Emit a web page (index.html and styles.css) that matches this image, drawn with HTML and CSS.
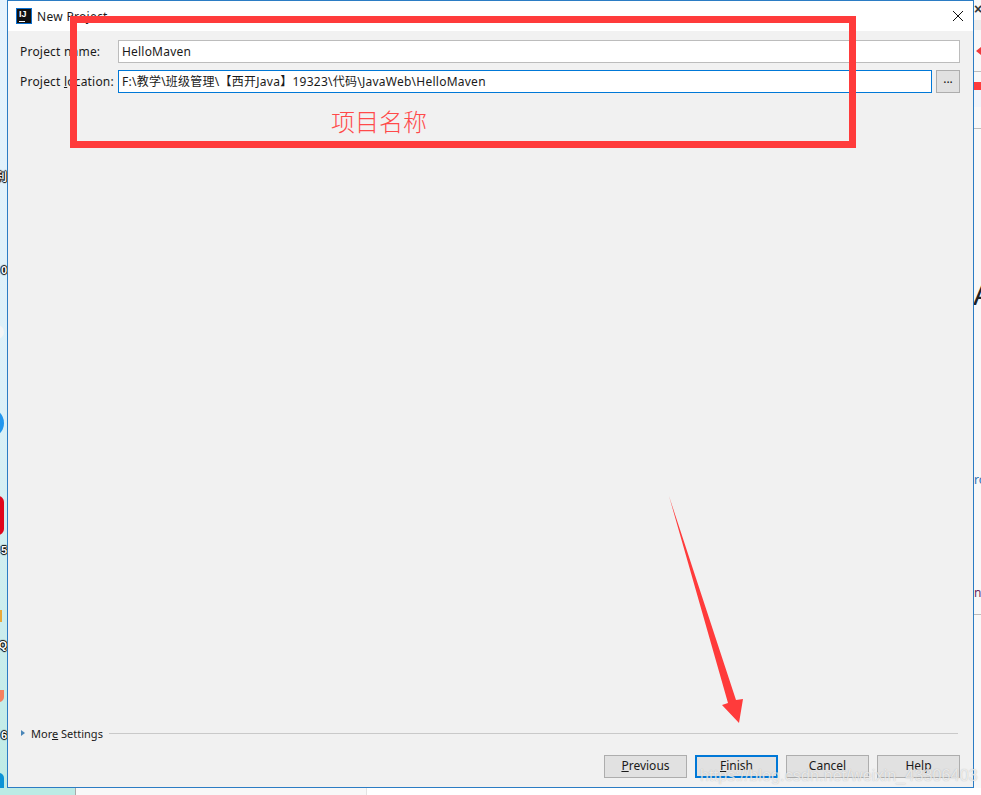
FILE: index.html

```html
<!DOCTYPE html>
<html lang="en">
<head>
  <meta charset="UTF-8" />
  <title>New Project</title>
  <link rel="stylesheet" href="styles.css">
</head>
<body>
  <div class="desktop">
    <div class="bg-left">
      <span class="bit label-bit bit-1">利</span>
      <span class="bit label-bit bit-2">0</span>
      <span class="bit bit-white"></span>
      <span class="bit bit-blue"></span>
      <span class="bit bit-red"></span>
      <span class="bit label-bit bit-3">5</span>
      <span class="bit bit-orange"></span>
      <span class="bit label-bit bit-4">Q</span>
      <span class="bit bit-coral"></span>
      <span class="bit label-bit bit-5">6</span>
      <span class="bit bit-cyan"></span>
    </div>

    <div class="dialog">
      <div class="titlebar">
        <div class="app-icon"><span>IJ</span><i></i></div>
        <div class="title">New Project</div>
        <svg class="close" width="12" height="12" viewBox="0 0 12 12">
          <path d="M1 1 L11 11 M11 1 L1 11" stroke="#111" stroke-width="1" fill="none"/>
        </svg>
      </div>

      <div class="content">
        <div class="form">
          <label class="field-label">Project name:</label>
          <div class="input wide">HelloMaven</div>
          <label class="field-label">Project <u>l</u>ocation:</label>
          <div class="location">
            <div class="input focused">F:\教学\班级管理\【西开Java】19323\代码\JavaWeb\HelloMaven</div>
            <button class="browse">...</button>
          </div>
        </div>

        <div class="more">
          <span class="arrow-right"></span>
          <span class="more-label">Mor<u>e</u> Settings</span>
          <span class="more-line"></span>
        </div>

        <div class="buttons">
          <button class="btn"><u>P</u>revious</button>
          <button class="btn primary"><u>F</u>inish</button>
          <button class="btn">Cancel</button>
          <button class="btn">Help</button>
        </div>
      </div>
    </div>

    <div class="bg-right">
      <span class="r-close">×</span>
      <span class="r-band"></span>
      <span class="r-tri"></span>
      <span class="r-line r-line-1"></span>
      <span class="r-red"></span>
      <span class="r-pale"></span>
      <span class="r-line r-line-2"></span>
      <span class="r-a">A</span>
      <span class="r-ro">ro</span>
      <span class="r-ni">ni</span>
      <span class="r-line r-line-3"></span>
    </div>

    <div class="bg-bottom">
      <div class="bottom-teal"></div>
      <div class="bottom-page"></div>
      <div class="bottom-rest"></div>
    </div>

    <div class="red-box"></div>
    <div class="red-note">项目名称</div>
    <svg class="red-arrow" width="981" height="795" viewBox="0 0 981 795">
      <polygon points="669,496 736,700 743,699 739,723 722,705 728,703" fill="#ff3b3b"/>
    </svg>
    <div class="watermark">https://blog.csdn.net/weixin_43306403</div>
  </div>
</body>
</html>
```

FILE: styles.css

```css
html, body {
  margin: 0;
  padding: 0;
}
body {
  font-family: "Noto Sans", "Noto Sans CJK SC", sans-serif;
  font-size: 12px;
  color: #1a1a1a;
  overflow: hidden;
}
.desktop {
  position: relative;
  width: 981px;
  height: 795px;
  overflow: hidden;
  background: #fff;
  display: grid;
  grid-template-columns: 7px 967px 7px;
  grid-template-rows: 788px 7px;
}

/* desktop peeking out around the dialog */
.bg-left {
  position: relative;
  overflow: hidden;
  background: linear-gradient(to bottom, #e6f3fd 0%, #dcf0f8 50%, #bfebe5 100%);
}
.bit {
  position: absolute;
  display: block;
}
.label-bit {
  right: 0;
  width: 14px;
  text-align: right;
  font: bold 11px/12px "Liberation Sans", "Noto Sans CJK SC", sans-serif;
  color: #fff;
  text-shadow: 1px 0 1px #000, -1px 0 1px #000, 0 1px 1px #000, 0 -1px 1px #000;
}
.bit-1 { top: 171px; }
.bit-2 { top: 264px; }
.bit-3 { top: 544px; }
.bit-4 { top: 639px; }
.bit-5 { top: 729px; }
.bit-white {
  top: 325px;
  left: -10px;
  width: 14px;
  height: 14px;
  border-radius: 50%;
  background: #f3f5f6;
}
.bit-blue {
  top: 408px;
  left: -26px;
  width: 30px;
  height: 30px;
  border-radius: 50%;
  background: #2196ee;
}
.bit-red {
  top: 496px;
  left: -12px;
  width: 16px;
  height: 39px;
  border-radius: 6px;
  background: #e0061c;
}
.bit-orange {
  top: 610px;
  left: 0;
  width: 2px;
  height: 12px;
  background: #e9a93a;
}
.bit-coral {
  top: 690px;
  left: -6px;
  width: 10px;
  height: 12px;
  border-radius: 0 0 6px 6px;
  background: #f5805f;
}
.bit-cyan {
  top: 773px;
  left: -12px;
  width: 16px;
  height: 30px;
  border-radius: 5px;
  background: #0d93d6;
}

.bg-right {
  position: relative;
  overflow: hidden;
  background: #f8f8f8;
}
.bg-right span {
  position: absolute;
  display: block;
}
.r-close {
  top: 1px;
  left: 0;
  font: bold 14px/16px "Liberation Sans", sans-serif;
  color: #333;
}
.r-band {
  top: 20px;
  left: 0;
  width: 7px;
  height: 10px;
  background: #ececec;
}
.r-tri {
  top: 47px;
  left: 2px;
  border-style: solid;
  border-width: 4px 5px 4px 0;
  border-color: transparent #f0393b transparent transparent;
}
.r-line {
  left: 0;
  width: 7px;
  height: 1px;
  background: #bdbdbd;
}
.r-line-1 { top: 71px; }
.r-line-2 { top: 128px; }
.r-line-3 { top: 614px; }
.r-red {
  top: 82px;
  left: 0;
  width: 7px;
  height: 8px;
  background: #ff3b3b;
}
.r-pale {
  top: 90px;
  left: 0;
  width: 7px;
  height: 17px;
  background: #f1f4fa;
}
.r-a {
  top: 280px;
  left: -1px;
  font: 30px/30px "Liberation Sans", sans-serif;
  color: #222;
}
.r-ro {
  top: 473px;
  left: 0;
  font: 12px/14px "Noto Sans", sans-serif;
  color: #2b6fb3;
}
.r-ni {
  top: 586px;
  left: 0;
  font: 12px/14px "Noto Sans", sans-serif;
  color: #6a2a5e;
}

.bg-bottom {
  grid-column: 1 / 4;
  display: flex;
}
.bottom-teal {
  width: 75px;
  background: #bcebe5;
  border-right: 1px solid #a9a9a9;
}
.bottom-page {
  width: 290px;
  background: #f8f8f8;
  border-right: 1px solid #e4e4e4;
}
.bottom-rest {
  flex: 1;
  background: #fff;
}

/* dialog */
.dialog {
  display: flex;
  flex-direction: column;
  border: 1px solid #2b7cc4;
  box-sizing: border-box;
  background: #f1f1f1;
  min-height: 0;
}
.titlebar {
  flex: none;
  height: 30px;
  background: #fff;
  display: flex;
  align-items: center;
  padding: 0 9px 0 8px;
  position: relative;
}
.app-icon {
  width: 14px;
  height: 14px;
  background: #111;
  border: 1px solid #0a6fd0;
  margin-right: 5px;
  position: relative;
  color: #fff;
}
.app-icon span {
  display: block;
  font: bold 9px/9px "Liberation Sans", sans-serif;
  padding: 1px 0 0 2px;
}
.app-icon i {
  position: absolute;
  left: 2px;
  bottom: 1px;
  width: 6px;
  height: 1px;
  background: #fff;
}
.title {
  flex: 1;
  font-size: 12px;
  letter-spacing: 0.3px;
}
.content {
  flex: 1;
  display: flex;
  flex-direction: column;
  padding: 9px 13px 9px 12px;
  min-height: 0;
}
.form {
  display: grid;
  grid-template-columns: 98px 1fr;
  grid-template-rows: 23px 23px;
  row-gap: 7px;
  align-items: center;
  flex: 1;
  align-content: start;
}
.field-label {
  white-space: nowrap;
  line-height: 23px;
  letter-spacing: 0.2px;
}
.input {
  box-sizing: border-box;
  height: 23px;
  background: #fff;
  border: 1px solid #bcbcbc;
  line-height: 21px;
  padding: 0 3px;
  white-space: nowrap;
  overflow: hidden;
  letter-spacing: 0.2px;
}
.input.focused {
  flex: 1;
  border-color: #0078d7;
  letter-spacing: 0.25px;
}
.location {
  display: flex;
  gap: 4px;
}
.browse {
  width: 24px;
  height: 23px;
  padding: 0 0 6px;
  font: 12px/12px "Noto Sans", sans-serif;
  color: #111;
  background: #e1e1e1;
  border: 1px solid #adadad;
}

.more {
  flex: none;
  display: flex;
  align-items: center;
  height: 14px;
  margin-bottom: 15px;
  margin-right: 2px;
}
.arrow-right {
  flex: none;
  border-style: solid;
  border-width: 3.5px 0 3.5px 4px;
  border-color: transparent transparent transparent #4a86b8;
  margin: 0 1px 0 1px;
}
.more-label {
  margin-left: 5px;
  white-space: nowrap;
  font-size: 11px;
}
.more-line {
  flex: 1;
  height: 1px;
  background: #c9c9c9;
  margin-left: 6px;
}

.buttons {
  flex: none;
  display: flex;
  justify-content: flex-end;
  gap: 8px;
}
.btn {
  box-sizing: border-box;
  width: 83px;
  height: 23px;
  padding: 0 0 2px;
  font: 12px/17px "Noto Sans", sans-serif;
  color: #1a1a1a;
  background: #e1e1e1;
  border: 1px solid #adadad;
}
.btn.primary {
  border: 2px solid #0078d7;
}

/* annotations painted over the screenshot */
.red-box {
  position: absolute;
  left: 70px;
  top: 16px;
  width: 786px;
  height: 132px;
  box-sizing: border-box;
  border: 7px solid #ff3b3b;
}
.red-note {
  position: absolute;
  left: 331px;
  top: 104px;
  font: 300 24px/34px "Noto Sans CJK SC", sans-serif;
  color: #ff4a4a;
}
.red-arrow {
  position: absolute;
  left: 0;
  top: 0;
}
.watermark {
  position: absolute;
  left: 700px;
  top: 766px;
  font: 16px/20px "Liberation Sans", sans-serif;
  letter-spacing: 0.15px;
  color: rgba(255, 255, 255, 0.7);
  text-shadow: 0 0 1px rgba(120, 120, 120, 0.5);
  white-space: nowrap;
}
```
